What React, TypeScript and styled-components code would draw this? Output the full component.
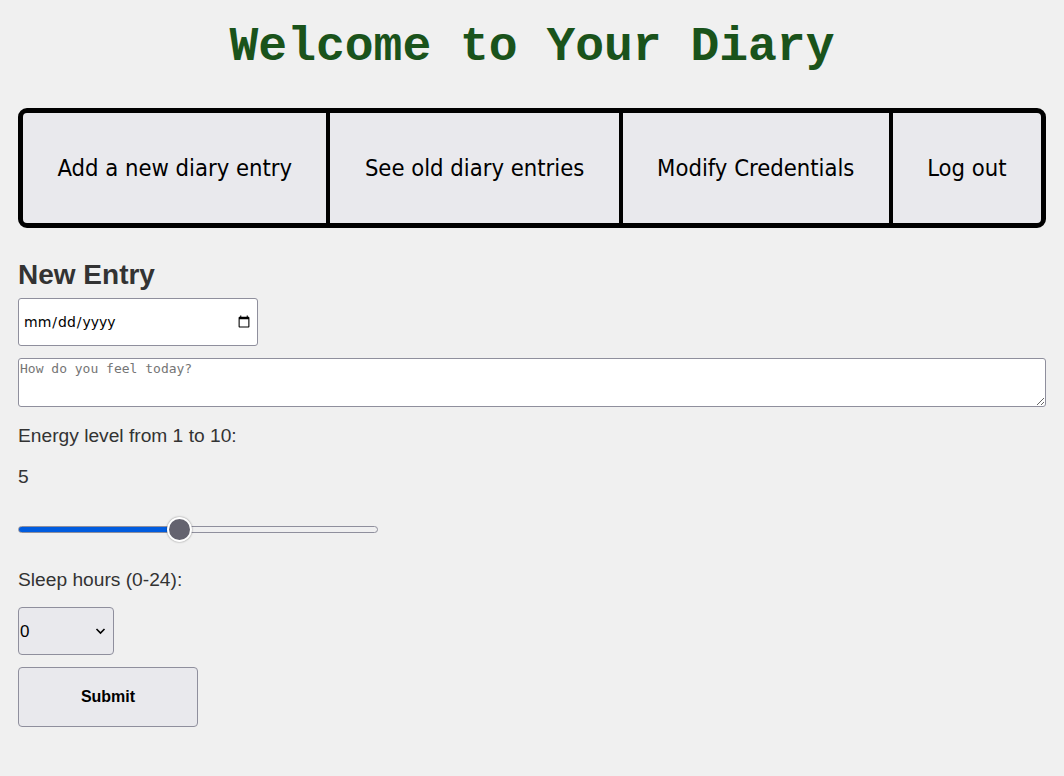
import React, { useState } from "react";
import styled, { createGlobalStyle } from "styled-components";

const Global = createGlobalStyle`
  html, body { margin: 0; padding: 0; background: #f0f0f0; }
  body { font-family: "Liberation Sans", Arial, sans-serif; color: #333; }
  * { box-sizing: border-box; }
`;

const Page = styled.div`
  padding: 18px 18px 40px;
  display: flex;
  flex-direction: column;
`;

const Title = styled.h1`
  margin: 2px 0 0;
  text-align: center;
  font-family: "Liberation Mono", "Courier New", monospace;
  font-weight: 700;
  font-size: 48px;
  line-height: 54px;
  color: #1a531b;
`;

const Nav = styled.nav`
  margin-top: 34px;
  display: flex;
  border: 5px solid #000;
  border-radius: 9px;
  overflow: hidden;
  height: 120px;
  background: #000;
  gap: 4px;
`;

const NavButton = styled.button`
  flex: 1 1 auto;
  padding: 0 30px;
  border: none;
  background: #e9e9ed;
  color: #000;
  font-family: "DejaVu Sans Condensed", "DejaVu Sans", Tahoma, sans-serif;
  font-size: 23.6px;
  cursor: pointer;
`;

const Heading = styled.h2`
  margin: 32px 0 8px;
  font-size: 28px;
  line-height: 30px;
  font-weight: 700;
  color: #333;
`;

const DateInput = styled.input`
  width: 240px;
  height: 48px;
  padding: 0 4px;
  border: 1px solid #8f8f9d;
  border-radius: 3px;
  background: #fff;
  font-family: "DejaVu Sans", sans-serif;
  font-size: 14px;
  color: #000;
`;

const TextArea = styled.textarea`
  margin-top: 12px;
  width: 100%;
  height: 49px;
  border: 1px solid #8f8f9d;
  border-radius: 3px;
  background: #fff;
  padding: 2px 1px;
  font-family: "DejaVu Sans Mono", monospace;
  font-size: 13px;
  &::placeholder { color: #757575; }
`;

const Label = styled.label`
  display: block;
  font-size: 19.2px;
  line-height: 22px;
  color: #333;
`;

const Value = styled.p`
  margin: 19px 0 0;
  font-size: 19.2px;
  line-height: 22px;
`;

const Range = styled.input`
  -webkit-appearance: none;
  appearance: none;
  margin: 28px 0 0;
  width: 360px;
  height: 26px;
  background: transparent;

  &::-webkit-slider-runnable-track {
    height: 7px;
    border-radius: 4px;
    border: 1px solid #8f8f9d;
    background: linear-gradient(
      to right,
      #005cdf 0,
      #005cdf var(--fill),
      #efeff0 var(--fill),
      #efeff0 100%
    );
  }
  &::-webkit-slider-thumb {
    -webkit-appearance: none;
    width: 25px;
    height: 25px;
    margin-top: -10px;
    border-radius: 50%;
    background: #64636f;
    border: 2px solid #fff;
    box-shadow: 0 0 2px rgba(0, 0, 0, 0.45);
  }
`;

const SelectWrap = styled.div`
  position: relative;
  width: 96px;
  height: 48px;
`;

const Select = styled.select`
  -webkit-appearance: none;
  appearance: none;
  width: 100%;
  height: 100%;
  padding: 0 0 0 1px;
  border: 1px solid #8f8f9d;
  border-radius: 4px;
  background: #e9e9ed;
  font-family: "Liberation Sans", Arial, sans-serif;
  font-size: 17px;
  color: #000;
`;

const Chevron = styled.svg`
  position: absolute;
  right: 8px;
  top: 20px;
  width: 11px;
  height: 8px;
  pointer-events: none;
`;

const Submit = styled.button`
  margin-top: 12px;
  width: 180px;
  height: 60px;
  border: 1px solid #8f8f9d;
  border-radius: 4px;
  background: #e9e9ed;
  color: #000;
  font-family: "Liberation Sans", Arial, sans-serif;
  font-weight: 700;
  font-size: 16px;
`;

const Form = styled.form`
  display: flex;
  flex-direction: column;
  align-items: flex-start;
`;

const Spacer = styled.div<{ $h: number }>`
  height: ${(p) => p.$h}px;
`;

export default function App() {
  const [energy, setEnergy] = useState(5);
  const fill = `${((energy - 1) / 9) * 100 + 2}%`;
  return (
    <Page>
      <Global />
      <Title>Welcome to Your Diary</Title>
      <Nav>
        <NavButton>Add a new diary entry</NavButton>
        <NavButton>See old diary entries</NavButton>
        <NavButton>Modify Credentials</NavButton>
        <NavButton>Log out</NavButton>
      </Nav>
      <Heading>New Entry</Heading>
      <Form onSubmit={(e) => e.preventDefault()}>
        <DateInput type="date" />
        <TextArea placeholder="How do you feel today?" />
        <Spacer $h={18} />
        <Label>Energy level from 1 to 10:</Label>
        <Value>{energy}</Value>
        <Range
          type="range"
          min={1}
          max={10}
          value={energy}
          style={{ ["--fill" as any]: fill }}
          onChange={(e) => setEnergy(Number(e.target.value))}
        />
        <Spacer $h={27} />
        <Label>Sleep hours (0-24):</Label>
        <Spacer $h={16} />
        <SelectWrap>
          <Select defaultValue="0">
            {Array.from({ length: 25 }, (_, i) => (
              <option key={i} value={i}>{i}</option>
            ))}
          </Select>
          <Chevron viewBox="0 0 11 8">
            <path d="M1.5 2 L5.5 6 L9.5 2" fill="none" stroke="#000" strokeWidth="1.6" />
          </Chevron>
        </SelectWrap>
        <Submit type="submit">Submit</Submit>
      </Form>
    </Page>
  );
}
